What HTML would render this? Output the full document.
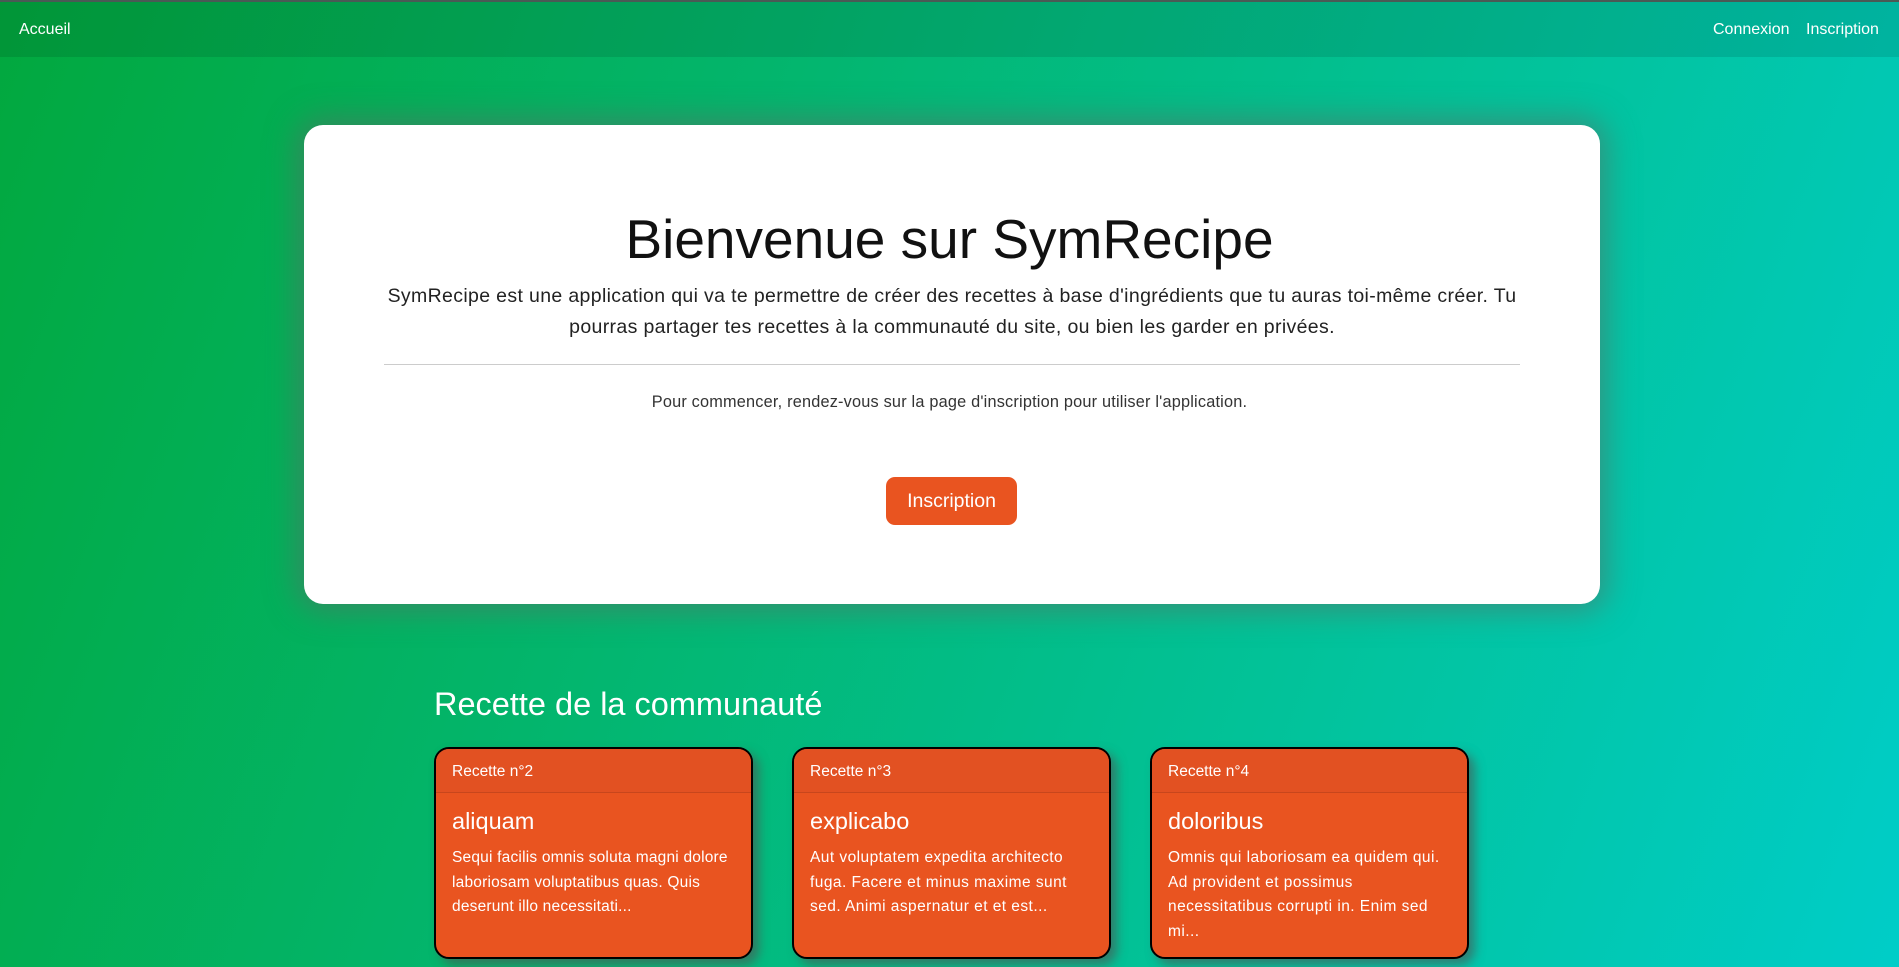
<!DOCTYPE html>
<html><head><meta charset="utf-8"><style>
*{box-sizing:border-box;margin:0;padding:0}
html,body{width:1899px;height:967px;overflow:hidden}
body{font-family:"Liberation Sans",sans-serif;background:linear-gradient(110deg,#02a83e 0%,#03b56c 35%,#02c39c 70%,#00cdc8 100%);position:relative}
.nav{position:absolute;left:0;top:0;width:1899px;height:57px;background:rgba(0,0,0,0.1);border-top:2px solid #4a5a55;color:#fff;font-size:16px}
.nav a{position:absolute;top:19px;color:#fff;text-decoration:none}
.card{position:absolute;left:304px;top:125px;width:1296px;height:479px;background:#fff;border-radius:19px;box-shadow:0 0 30px 8px rgba(90,110,100,0.55);text-align:center;color:#111}
h1{position:absolute;top:206px;left:0;width:1899px;text-align:center;font-weight:normal;font-size:55px;line-height:66px;color:#111}
.p{position:absolute;left:384px;width:1136px;top:281px;font-size:19.5px;line-height:31px;text-align:center;color:#222;letter-spacing:0.35px}
.hr{position:absolute;left:384px;width:1136px;top:364px;border-top:1px solid #ccc}
.small{position:absolute;left:0;width:1899px;top:393px;text-align:center;font-size:16.3px;color:#333;letter-spacing:0.2px}
.btn{position:absolute;left:886px;top:477px;width:131px;height:48px;background:#e95420;color:#fff;border-radius:9px;font-size:19.5px;line-height:48px;text-align:center}
h2{position:absolute;left:434px;top:686px;font-weight:normal;font-size:32.5px;color:#fff}
.rc{position:absolute;top:747px;width:319px;height:212px;background:#e95420;border:2.5px solid #000;border-radius:15px;box-shadow:6px 6px 10px rgba(80,80,80,0.6);color:#fff;overflow:hidden}
.rc .h{height:44px;background:#e25122;border-bottom:1px solid #c8461c;padding:14px 0 0 16px;font-size:15.5px}
.rc .t{padding:15px 16px 0;font-size:23.5px}
.rc .b{padding:11px 14px 0 16px;font-size:15.5px;line-height:24.5px;letter-spacing:0.45px}
</style></head><body>
<div class="nav"><a style="left:19px">Accueil</a><a style="left:1713px">Connexion</a><a style="left:1806px">Inscription</a></div>
<div class="card"></div>
<h1>Bienvenue sur SymRecipe</h1>
<div class="p">SymRecipe est une application qui va te permettre de créer des recettes à base d'ingrédients que tu auras toi-même créer. Tu<br>pourras partager tes recettes à la communauté du site, ou bien les garder en privées.</div>
<div class="hr"></div>
<div class="small">Pour commencer, rendez-vous sur la page d'inscription pour utiliser l'application.</div>
<div class="btn">Inscription</div>
<h2>Recette de la communauté</h2>
<div class="rc" style="left:434px"><div class="h">Recette n°2</div><div class="t">aliquam</div><div class="b" style="letter-spacing:0.2px;padding-right:6px">Sequi facilis omnis soluta magni dolore<br>laboriosam voluptatibus quas. Quis<br>deserunt illo necessitati...</div></div>
<div class="rc" style="left:792px"><div class="h">Recette n°3</div><div class="t">explicabo</div><div class="b">Aut voluptatem expedita architecto fuga. Facere et minus maxime sunt sed. Animi aspernatur et et est...</div></div>
<div class="rc" style="left:1150px"><div class="h">Recette n°4</div><div class="t">doloribus</div><div class="b">Omnis qui laboriosam ea quidem qui. Ad provident et possimus necessitatibus corrupti in. Enim sed mi...</div></div>
</body></html>
